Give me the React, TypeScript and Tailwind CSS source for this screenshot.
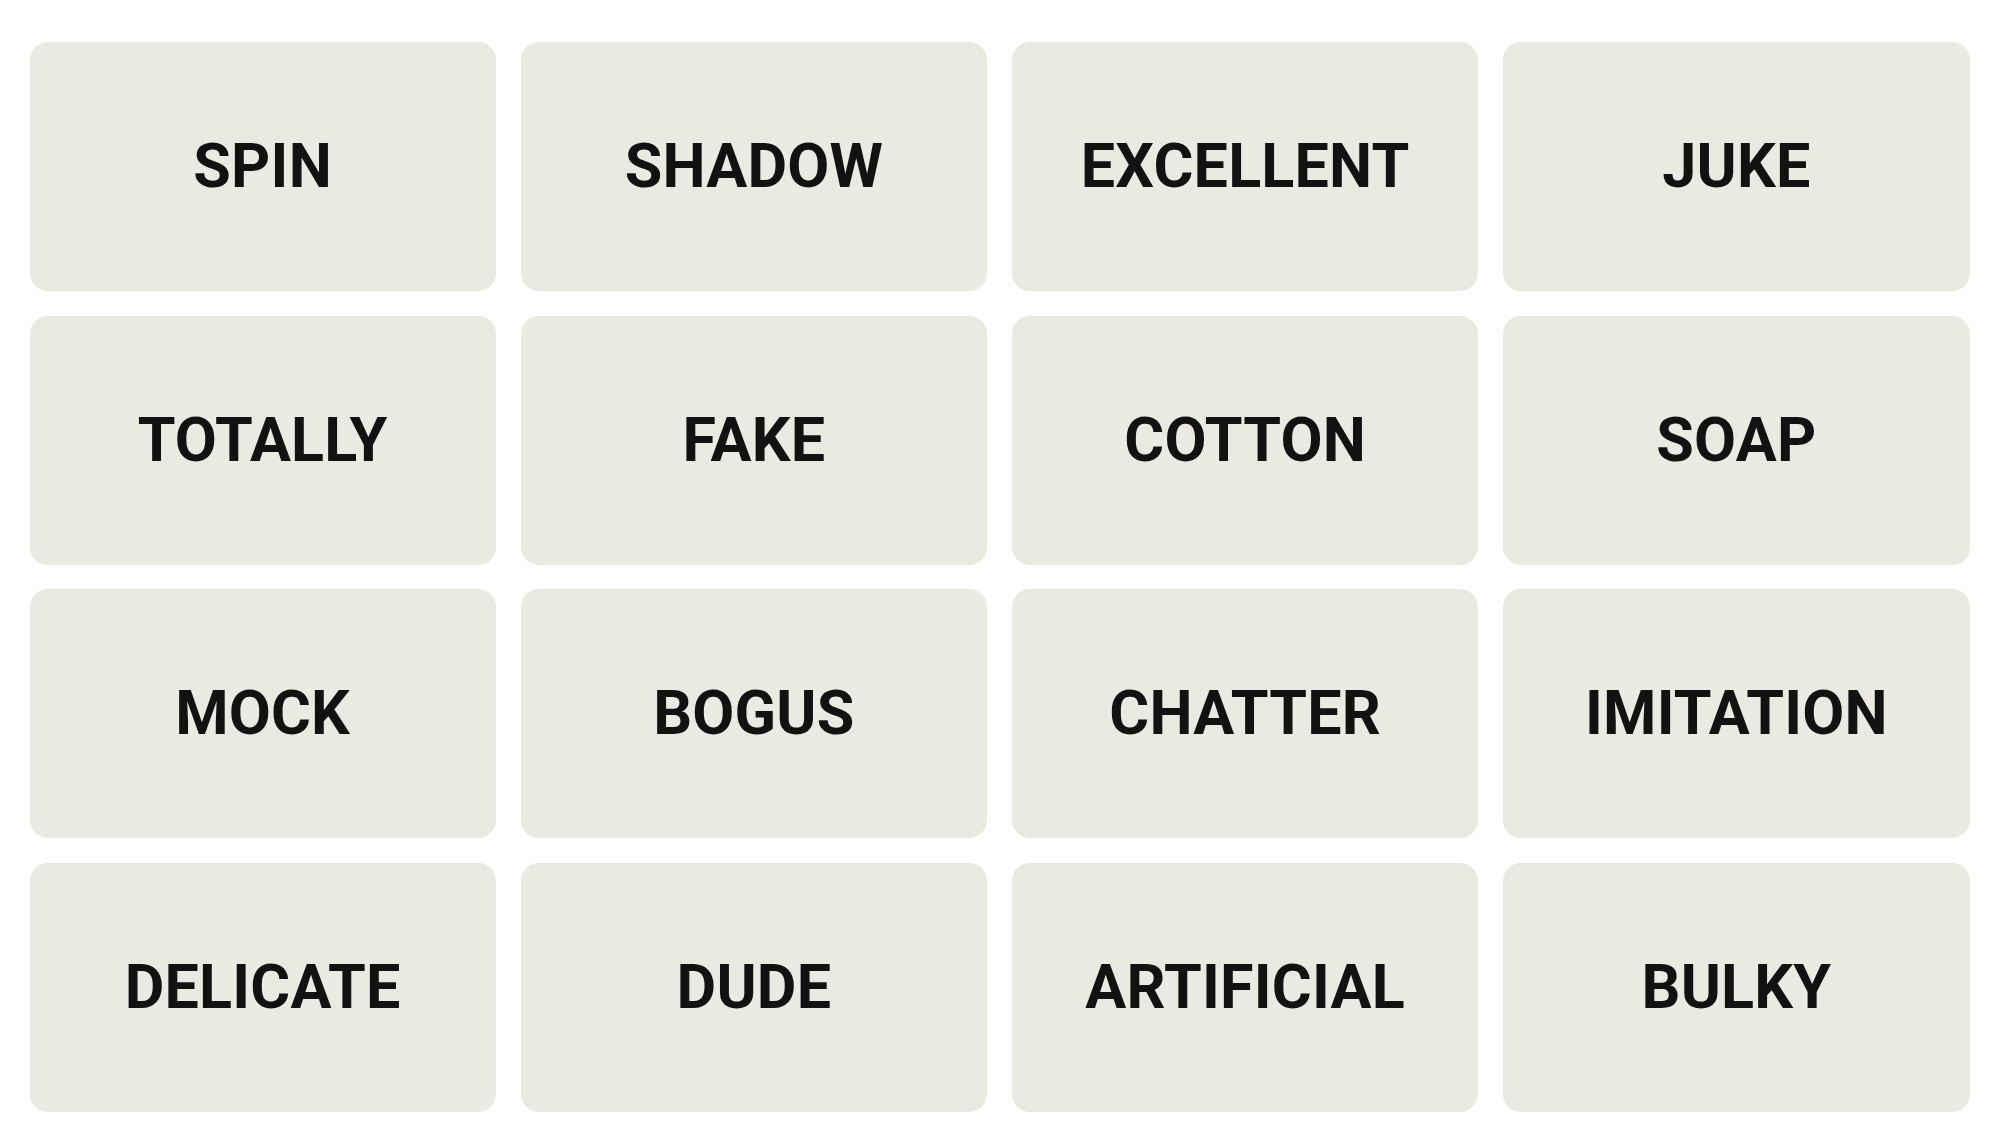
const words = [
  "SPIN", "SHADOW", "EXCELLENT", "JUKE",
  "TOTALLY", "FAKE", "COTTON", "SOAP",
  "MOCK", "BOGUS", "CHATTER", "IMITATION",
  "DELICATE", "DUDE", "ARTIFICIAL", "BULKY",
];

function Tile({ word }: { word: string }) {
  return (
    <button
      type="button"
      className="flex h-[249px] items-center justify-center rounded-[18px] bg-[#eaeae2] text-[61px] font-bold leading-none tracking-[0.2px] text-[#121212] [font-family:Roboto,'Liberation_Sans',sans-serif]"
    >
      {word}
    </button>
  );
}

export default function App() {
  return (
    <div className="min-h-[1138px] w-full bg-white px-[29.5px] pt-[42px] pb-[26px]">
      <div className="grid grid-cols-4 gap-x-[25px] gap-y-[24.7px]">
        {words.map((w) => (
          <Tile key={w} word={w} />
        ))}
      </div>
    </div>
  );
}
